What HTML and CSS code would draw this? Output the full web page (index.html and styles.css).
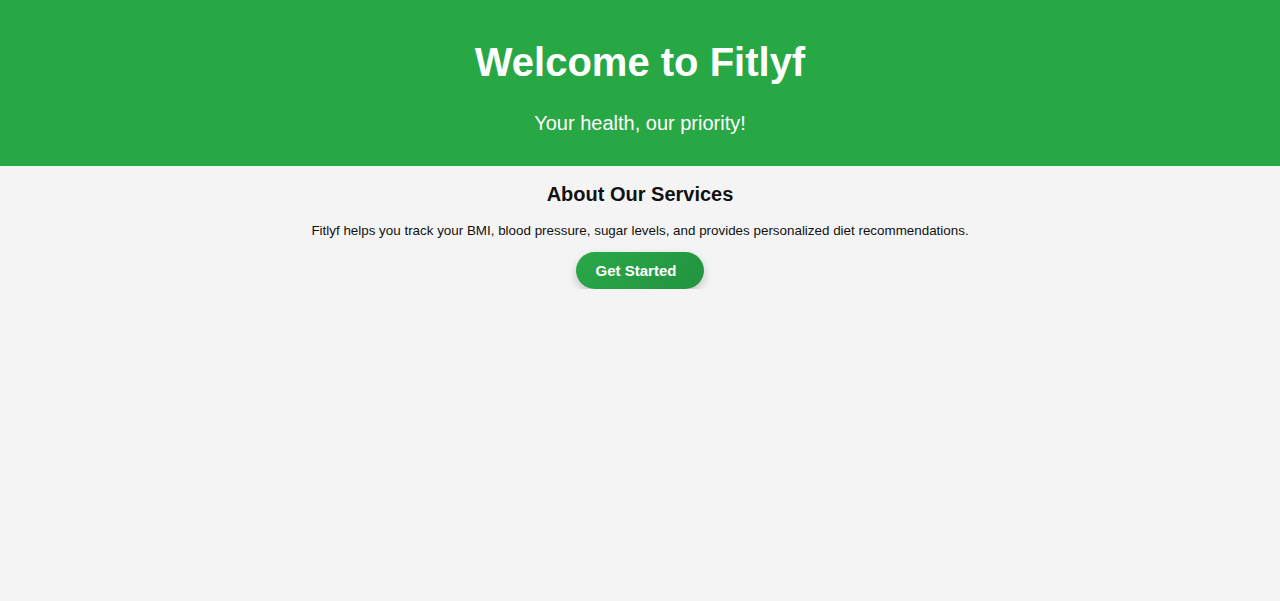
FILE: index.html
```html
<!DOCTYPE html>
<html lang="en">
<head>
<meta charset="UTF-8">
<title>Fitlyf</title>
<link rel="stylesheet" href="styles.css">
</head>
<body>
<header class="hero">
  <h1 class="hero-title">Welcome to Fitlyf</h1>
  <p class="hero-sub">Your health, our priority!</p>
</header>
<section class="about">
  <h2 class="about-title">About Our Services</h2>
  <p class="about-text">Fitlyf helps you track your BMI, blood pressure, sugar levels, and provides personalized diet recommendations.</p>
  <a class="btn" href="#">Get Started</a>
</section>
</body>
</html>
```
FILE: styles.css
```css
html, body {
  margin: 0;
  padding: 0;
}
body {
  background: #f4f4f4;
  font-family: "Liberation Sans", Arial, sans-serif;
  color: #111;
}
.hero {
  background: #28a745;
  color: #fff;
  text-align: center;
  padding: 13px 0 11px;
  display: flow-root;
}
.hero-title {
  font-size: 40px;
  font-weight: bold;
  margin: 27px 0;
}
.hero-sub {
  font-size: 20px;
  margin: 20px 0;
}
.about {
  text-align: center;
  display: flow-root;
}
.about-title {
  font-size: 20px;
  font-weight: bold;
  margin: 17px 0;
}
.about-text {
  font-size: 13.4px;
  line-height: 16px;
  margin: 14px 0 13px;
}
.btn {
  display: inline-block;
  padding: 10px 28px 10px 20px;
  border-radius: 20px;
  background: linear-gradient(135deg, #2aa84a 0%, #23933f 100%);
  color: #fff;
  font-size: 15px;
  font-weight: bold;
  line-height: 17px;
  text-decoration: none;
  box-shadow: 0 4px 8px rgba(0, 0, 0, 0.2);
}
```
